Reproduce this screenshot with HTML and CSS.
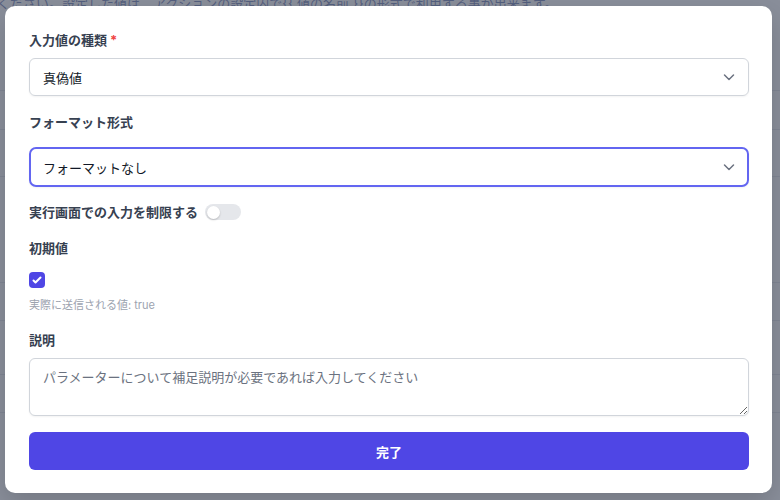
FILE: index.html
```html
<!DOCTYPE html>
<html lang="ja">
<head>
<meta charset="utf-8">
<link rel="stylesheet" href="styles.css">
</head>
<body>
<div class="page">
  <p class="bg-text">ください。設定した値は、アクションの設定内で{{ 値の名前 }}の形式で利用する事が出来ます。</p>
  <div class="bg-row r1"></div>
  <div class="bg-row r2"></div>
  <div class="bg-row r3"></div>
  <div class="bg-row r4"></div>
  <div class="bg-row r5"></div>
  <div class="bg-row r6"></div>
  <div class="bg-row r7"></div>
</div>
<div class="overlay"></div>
<div class="modal">
  <div class="label">入力値の種類 <span class="req">*</span></div>
  <div class="select mt8">
    <span>真偽値</span>
    <svg class="chev" viewBox="0 0 20 20" width="20" height="20"><path fill="none" stroke="#6b7280" stroke-width="1.5" stroke-linecap="round" stroke-linejoin="round" d="M5.5 8l4.5 4.5L14.5 8"/></svg>
  </div>
  <div class="label mt16">フォーマット形式</div>
  <div class="select focus mt15">
    <span>フォーマットなし</span>
    <svg class="chev" viewBox="0 0 20 20" width="20" height="20"><path fill="none" stroke="#6b7280" stroke-width="1.5" stroke-linecap="round" stroke-linejoin="round" d="M5.5 8l4.5 4.5L14.5 8"/></svg>
  </div>
  <div class="toggle-row mt15">
    <span class="label">実行画面での入力を制限する</span>
    <span class="toggle"><span class="knob"></span></span>
  </div>
  <div class="label mt16">初期値</div>
  <div class="checkbox mt14">
    <svg viewBox="0 0 16 16" width="16" height="16"><path fill="#fff" d="M12.207 4.793a1 1 0 010 1.414l-5 5a1 1 0 01-1.414 0l-2-2a1 1 0 011.414-1.414L6.5 9.086l4.293-4.293a1 1 0 011.414 0z"/></svg>
  </div>
  <div class="helper">実際に送信される値: true</div>
  <div class="label mt17">説明</div>
  <textarea class="textarea mt8" placeholder="パラメーターについて補足説明が必要であれば入力してください"></textarea>
  <button class="btn mt16">完了</button>
</div>
</body>
</html>
```
FILE: styles.css
```css
* { box-sizing: border-box; }
html, body { margin: 0; padding: 0; }
body {
  width: 780px;
  height: 500px;
  overflow: hidden;
  background: #ffffff;
  font-family: Inter, "Noto Sans CJK JP", sans-serif;
  position: relative;
}
.page { width: 780px; }
.bg-text {
  margin: -7px 0 0 -3px;
  font-size: 13px;
  line-height: 20px;
  color: #1e3a8a;
  white-space: nowrap;
  height: 18px;
}
.bg-row { border-bottom: 1px solid #d6d9df; }
.r1 { height: 80px; }
.r2 { height: 39px; }
.r3 { height: 47px; }
.r4 { height: 106px; }
.r5 { height: 38px; }
.r6 { height: 54px; }
.r7 { height: 38px; }
.overlay {
  position: absolute;
  inset: 0;
  background: rgba(100, 107, 122, 0.76);
}
.modal {
  position: absolute;
  left: 5px;
  top: 6px;
  width: 767px;
  height: 487px;
  background: #fff;
  border-radius: 10px;
  box-shadow: 0 10px 25px rgba(0,0,0,0.15);
  padding: 24px 23px 23px 24px;
  display: flex;
  flex-direction: column;
}
.label {
  font-size: 13px;
  line-height: 20px;
  font-weight: 700;
  color: #374151;
}
.req { color: #ef4444; }
.mt8 { margin-top: 8px; }
.mt14 { margin-top: 14px; }
.mt15 { margin-top: 15px; }
.mt16 { margin-top: 16px; }
.mt17 { margin-top: 17px; }
.select {
  height: 38px;
  border: 1px solid #d1d5db;
  border-radius: 6px;
  box-shadow: 0 1px 2px rgba(0,0,0,0.05);
  display: flex;
  align-items: center;
  justify-content: space-between;
  padding: 0 9px 0 13px;
  font-size: 13px;
  color: #111827;
}
.select.focus {
  height: 40px;
  border: 2px solid #6366f1;
  border-radius: 7px;
  padding: 0 8px 0 12px;
}
.chev { display: block; }
.toggle-row {
  display: flex;
  align-items: center;
  gap: 7px;
  height: 20px;
}
.toggle {
  width: 36px;
  height: 16px;
  border-radius: 8px;
  background: #e5e7eb;
  display: flex;
  align-items: center;
  padding: 0 2px;
}
.knob {
  width: 13px;
  height: 13px;
  border-radius: 50%;
  background: #fff;
  box-shadow: 0 1px 2px rgba(0,0,0,0.2);
}
.checkbox {
  width: 16px;
  height: 16px;
  border-radius: 4px;
  background: #4f46e5;
}
.checkbox svg { display: block; }
.helper {
  margin-top: 9px;
  font-size: 11px;
  line-height: 16px;
  color: #9ca3af;
}
.textarea {
  display: block;
  width: 100%;
  height: 58px;
  border: 1px solid #d1d5db;
  border-radius: 6px;
  box-shadow: 0 1px 2px rgba(0,0,0,0.05);
  padding: 8px 13px;
  font-family: Inter, "Noto Sans CJK JP", sans-serif;
  font-size: 13px;
  line-height: 20px;
  color: #111827;
  resize: vertical;
  outline: none;
}
.textarea::placeholder { color: #6b7280; }
.btn {
  display: block;
  width: 100%;
  height: 38px;
  border: none;
  border-radius: 6px;
  background: #4f46e5;
  color: #fff;
  font-family: Inter, "Noto Sans CJK JP", sans-serif;
  font-size: 13px;
  font-weight: 700;
}
```
